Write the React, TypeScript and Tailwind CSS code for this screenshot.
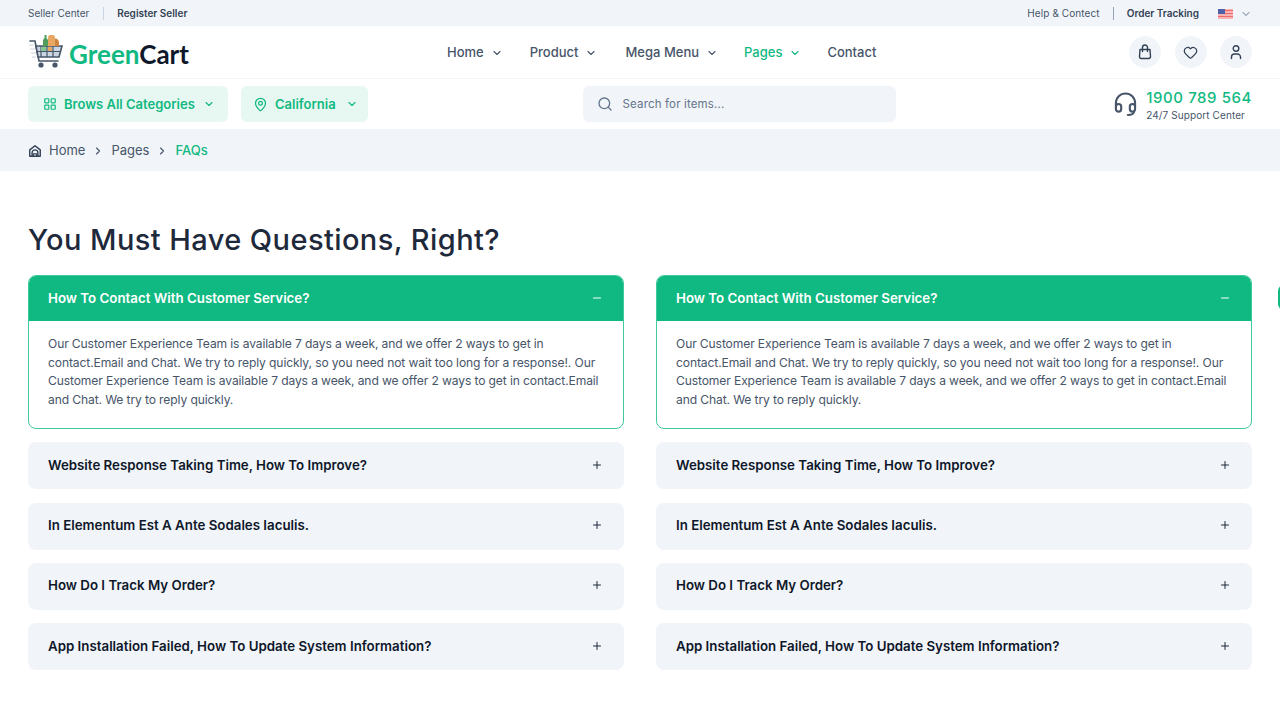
import React from 'react';
import { ChevronDown, ChevronRight, LayoutGrid, MapPin, Search, Heart, Minus, Plus } from 'lucide-react';

const navItems = [
  { label: 'Home', chevron: true, gap: 'mr-[27px]' },
  { label: 'Product', chevron: true, gap: 'mr-[28px]' },
  { label: 'Mega Menu', chevron: true, gap: 'mr-[26px]' },
  { label: 'Pages', chevron: true, active: true, gap: 'mr-[26px]' },
  { label: 'Contact', chevron: false, gap: '' },
];

const questions = [
  'Website Response Taking Time, How To Improve?',
  'In Elementum Est A Ante Sodales Iaculis.',
  'How Do I Track My Order?',
  'App Installation Failed, How To Update System Information?',
];

const CartLogo = () => (
  <svg width="36" height="34" viewBox="0 0 36 34" fill="none">
    <path d="M2 6h5l4 20h19" stroke="#475569" strokeWidth="1.6" strokeLinecap="round" />
    <path d="M8 11h26l-3 11H10z" fill="#cbd5e1" stroke="#475569" strokeWidth="1.6" />
    <path d="M13 11v11M19 11v11M25 11v11M9 16.5h24" stroke="#475569" strokeWidth="1.2" />
    <rect x="13" y="12" width="5" height="4" fill="#86c98e" />
    <rect x="20" y="12" width="4" height="4" fill="#e9a862" />
    <path d="M15 11V5l1.500-2V0h2v3l1.500 2v6z" fill="#4f9e5c" />
    <path d="M20 11V3a3.500 3.500 0 0 1 7 0v8z" fill="#e9a862" />
    <path d="M27 11V3.500c2.500 0 4 2 4 4V11z" fill="#cf8540" />
    <circle cx="13" cy="30" r="2.600" fill="#475569" />
    <circle cx="27" cy="30" r="2.600" fill="#475569" />
    <path d="M1 10h5M2 14h5M3 18h5M4 22h4" stroke="#cbd5e1" strokeWidth="1.200" />
  </svg>
);

const Flag = () => (
  <svg width="15" height="10" viewBox="0 0 15 10">
    <rect width="15" height="10" fill="#f8b4b4" />
    <path d="M0 1.500h15M0 4.500h15M0 7.500h15" stroke="#ef6a6a" strokeWidth="1.100" />
    <rect width="7" height="5" fill="#4f5fa8" />
  </svg>
);

const BagIcon = () => (
  <svg width="16" height="16" viewBox="0 0 16 16" fill="none" stroke="#334155" strokeWidth="1.400" strokeLinecap="round" strokeLinejoin="round">
    <path d="M3 5.500h10l.5 7a2 2 0 0 1-2 2h-7a2 2 0 0 1-2-2z" />
    <path d="M5.500 7.500V3.500a2.500 2.500 0 0 1 5 0v4" />
  </svg>
);

const UserIcon = () => (
  <svg width="16" height="16" viewBox="0 0 16 16" fill="none" stroke="#334155" strokeWidth="1.400" strokeLinecap="round">
    <circle cx="8" cy="4.500" r="2.800" />
    <path d="M3.500 14.500v-1.500a3 3 0 0 1 3-3h3a3 3 0 0 1 3 3v1.500" />
  </svg>
);

const HeadsetIcon = () => (
  <svg width="23" height="26" viewBox="0 0 24 26" fill="none" stroke="#475569" strokeWidth="2.200" strokeLinecap="round">
    <path d="M2 15V12a10 10 0 0 1 20 0v3" />
    <rect x="2" y="13" width="5.500" height="8" rx="2.700" />
    <rect x="16.500" y="13" width="5.500" height="8" rx="2.700" />
    <path d="M21 21c-.5 2.500-3 3.500-6.500 3.500" />
  </svg>
);

const Accordion = () => (
  <div className="flex flex-col">
    <div className="rounded-lg border border-[#3ecb9c] overflow-hidden">
      <div className="h-[45px] bg-[#10b981] pl-[19px] pr-5 flex items-center justify-between">
        <span className="text-[13.300px] font-semibold text-white">How To Contact With Customer Service?</span>
        <Minus size={12} className="text-white -translate-y-px" />
      </div>
      <p className="pl-[19px] pt-[14px] pb-[19px] whitespace-nowrap text-[12.100px] tracking-[-0.12px] leading-[18.500px] text-[#475569]">
        Our Customer Experience Team is available 7 days a week, and we offer 2 ways to get in<br />
        contact.Email and Chat. We try to reply quickly, so you need not wait too long for a response!. Our<br />
        Customer Experience Team is available 7 days a week, and we offer 2 ways to get in contact.Email<br />
        and Chat. We try to reply quickly.
      </p>
    </div>
    {questions.map(q => (
      <div key={q} className="mt-[13.300px] h-[47px] rounded-lg bg-[#f1f5f9] pl-5 pr-[21px] flex items-center justify-between">
        <span className="text-[13.300px] font-semibold text-[#0f172a]">{q}</span>
        <Plus size={12} className="text-[#1e293b] -translate-y-px" />
      </div>
    ))}
  </div>
);

export default function App() {
  return (
    <div className="relative h-[720px] overflow-hidden bg-white font-['Inter',sans-serif] text-[#334155]">
      <div className="h-[26px] bg-[#f1f5f9] px-7 pt-px flex items-center justify-between text-[10px]">
        <div className="flex items-center">
          <span className="text-[#475569]">Seller Center</span>
          <span className="mx-[13.500px] h-[13px] w-px bg-[#cbd5e1]" />
          <span className="font-semibold text-[#334155]">Register Seller</span>
        </div>
        <div className="flex items-center">
          <span className="tracking-[0.1px] text-[#475569]">Help &amp; Contect</span>
          <span className="mx-[13px] h-[13px] w-px bg-[#94a3b8]" />
          <span className="font-semibold text-[#334155]">Order Tracking</span>
          <span className="ml-[19px]"><Flag /></span>
          <ChevronDown size={12} className="ml-[7px] text-[#64748b]" />
        </div>
      </div>

      <div className="h-[53px] px-7 border-b border-[#f1f5f9] flex items-center">
        <div className="w-[419px] flex items-center gap-[5px]">
          <CartLogo />
          <span className="pt-[3px] font-['Lato',sans-serif] text-[26px] font-bold leading-none text-[#10b981]">Green<span className="text-[#0f172a]">Cart</span></span>
        </div>
        <nav className="pt-px flex items-center text-[13px] font-medium text-[#475569]">
          {navItems.map(item => (
            <div key={item.label} className={`flex items-center ${item.gap} ${item.active ? 'text-[#10b981]' : ''}`}>
              {item.label}
              {item.chevron && <ChevronDown size={12} className="ml-[7px]" strokeWidth={2.200} />}
            </div>
          ))}
        </nav>
        <div className="ml-auto flex items-center gap-[13.500px]">
          <div className="w-8 h-8 rounded-full bg-[#f1f5f9] flex items-center justify-center"><BagIcon /></div>
          <div className="w-8 h-8 rounded-full bg-[#f1f5f9] flex items-center justify-center"><Heart size={15} className="text-[#334155]" /></div>
          <div className="w-8 h-8 rounded-full bg-[#f1f5f9] flex items-center justify-center"><UserIcon /></div>
        </div>
      </div>

      <div className="h-[50px] px-7 flex items-center justify-between">
        <div className="flex items-center gap-[13px]">
          <div className="h-9 w-[200px] rounded-md bg-[#e7f8f2] pl-[15px] flex items-center text-[13px] font-semibold text-[#10b981]">
            <LayoutGrid size={14} strokeWidth={2} />
            <span className="ml-[7px] pt-px">Brows All Categories</span>
            <ChevronDown size={12} className="ml-2" strokeWidth={2.200} />
          </div>
          <div className="h-9 w-[127px] rounded-md bg-[#e7f8f2] pl-3 flex items-center text-[13px] font-semibold text-[#10b981]">
            <MapPin size={15} strokeWidth={2} />
            <span className="ml-[7px] pt-px">California</span>
            <ChevronDown size={12} className="ml-[10px]" strokeWidth={2.200} />
          </div>
        </div>
        <div className="mr-[4px] h-9 w-[313px] rounded-md bg-[#f1f5f9] pl-[14px] flex items-center text-[11.500px] tracking-[0.15px] text-[#64748b]">
          <Search size={16} />
          <span className="ml-[10px] pt-[2px]">Search for items...</span>
        </div>
        <div className="flex items-center gap-[9px]">
          <HeadsetIcon />
          <div className="pt-[3px] flex flex-col">
            <span className="text-[15px] font-medium leading-[20px] tracking-[0.58px] text-[#10b981]">1900 789 564</span>
            <span className="text-[10px] leading-[15px] tracking-[0.1px] text-[#475569]">24/7 Support Center</span>
          </div>
        </div>
      </div>

      <div className="h-[42px] bg-[#f1f5f9] px-7 pt-[2px] flex items-center text-[13px] text-[#475569]">
        <svg width="14" height="14" viewBox="0 0 24 24" fill="none" stroke="#334155" strokeWidth="2.400" strokeLinejoin="round">
          <path d="M3 21V10l9-7 9 7v11z" />
          <path d="M7 21v-6a5 5 0 0 1 10 0v6" />
          <path d="M9 21v-4h6v4" />
        </svg>
        <span className="ml-[7px]">Home</span>
        <ChevronRight size={12} className="mx-[7px]" strokeWidth={2.200} />
        <span>Pages</span>
        <ChevronRight size={12} className="mx-[7px]" strokeWidth={2.200} />
        <span className="font-medium text-[#10b981]">FAQs</span>
      </div>

      <div className="px-7 pt-[51px]">
        <h1 className="text-[29px] font-medium leading-9 tracking-[0.42px] text-[#1e293b]">You Must Have Questions, Right?</h1>
        <div className="mt-[17px] grid grid-cols-2 gap-8">
          <Accordion />
          <Accordion />
        </div>
      </div>

      <div className="absolute right-[-24px] top-[285px] w-[26px] h-[25px] rounded-md bg-[#10b981]" />
    </div>
  );
}
